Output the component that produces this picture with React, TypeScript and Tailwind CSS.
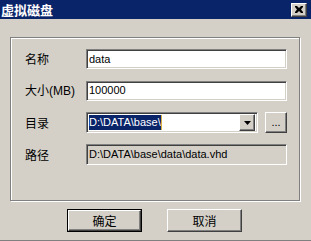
import React from "react";

const sunken =
  "border border-t-[#808080] border-l-[#808080] border-r-white border-b-white shadow-[inset_1px_1px_0_#404040,inset_-1px_-1px_0_#d4d0c8]";
const raised =
  "border border-t-white border-l-white border-r-[#404040] border-b-[#404040] shadow-[inset_-1px_-1px_0_#808080]";

const latin = { fontFamily: '"Liberation Sans", Arial, sans-serif' };
const cjk = { fontFamily: '"Noto Sans CJK SC", "Liberation Sans", sans-serif' };

function Label({ children }: { children: React.ReactNode }) {
  return (
    <div className="w-[61px] text-[12px] leading-[20px] text-black" style={cjk}>
      {children}
    </div>
  );
}

export default function App() {
  return (
    <div className="w-[311px] h-[241px] bg-[#d4d0c8] flex flex-col border-b border-[#808080] overflow-hidden">
      {/* title bar */}
      <div className="h-[19px] bg-[#0a246a] flex items-center justify-between pl-[1px] pr-[4px]">
        <span className="text-white font-bold text-[13px] leading-[19px]" style={cjk}>
          虚拟磁盘
        </span>
        <div className={`w-[16px] h-[14px] bg-[#d4d0c8] ${raised} flex items-center justify-center`}>
          <svg width="8" height="7" viewBox="0 0 8 7">
            <path d="M0 0h2l2 2 2-2h2v1l-2 2.5 2 2.5v1h-2l-2-2-2 2h-2v-1l2-2.5-2-2.5z" fill="#000" />
          </svg>
        </div>
      </div>

      {/* group box */}
      <div className="ml-[10px] mt-[18px] w-[290px] h-[164px] border border-[#808080] shadow-[inset_1px_1px_0_#fff,1px_1px_0_#fff] flex flex-col pl-[14px] pt-[11px] gap-[11px]">
        <div className="flex items-center">
          <Label>名称</Label>
          <div className={`w-[201px] h-[20px] bg-white ${sunken} flex items-center pl-[2px] text-[11px] text-black`} style={latin}>
            data
          </div>
        </div>
        <div className="flex items-center">
          <Label>
            大小<span style={latin} className="text-[12px]">(MB)</span>
          </Label>
          <div className={`w-[201px] h-[20px] bg-white ${sunken} flex items-center pl-[2px] text-[11px] text-black`} style={latin}>
            100000
          </div>
        </div>
        <div className="flex items-center">
          <Label>目录</Label>
          <div className={`w-[172px] h-[21px] bg-white ${sunken} flex items-center pl-[2px] pr-[2px]`}>
            <div className="flex-1 flex items-center h-[15px]">
              <span className="bg-[#0a246a] text-white text-[11px] leading-[15px]" style={latin}>
                D:\DATA\base\
              </span>
              <span className="w-[1px] h-[15px] bg-[#d8b040]" />
            </div>
            <div className={`w-[16px] h-[17px] bg-[#d4d0c8] ${raised} flex items-center justify-center`}>
              <svg width="7" height="4" viewBox="0 0 7 4">
                <path d="M0 0h7l-3.5 4z" fill="#000" />
              </svg>
            </div>
          </div>
          <div className={`ml-[7px] w-[22px] h-[21px] bg-[#d4d0c8] ${raised} flex items-center justify-center text-[11px] text-black`} style={latin}>
            ...
          </div>
        </div>
        <div className="flex items-center">
          <Label>路径</Label>
          <div className={`w-[201px] h-[21px] bg-[#d4d0c8] ${sunken} flex items-center pl-[2px] text-[11px] text-black`} style={latin}>
            D:\DATA\base\data\data.vhd
          </div>
        </div>
      </div>

      {/* buttons */}
      <div className="flex pl-[67px] mt-[8px] gap-[25px]">
        <div className="w-[75px] h-[23px] border border-black">
          <div className={`w-full h-full ${raised} flex items-center justify-center text-[12px] text-black`} style={cjk}>
            确定
          </div>
        </div>
        <div className={`w-[75px] h-[23px] ${raised} flex items-center justify-center text-[12px] text-black`} style={cjk}>
          取消
        </div>
      </div>
    </div>
  );
}
